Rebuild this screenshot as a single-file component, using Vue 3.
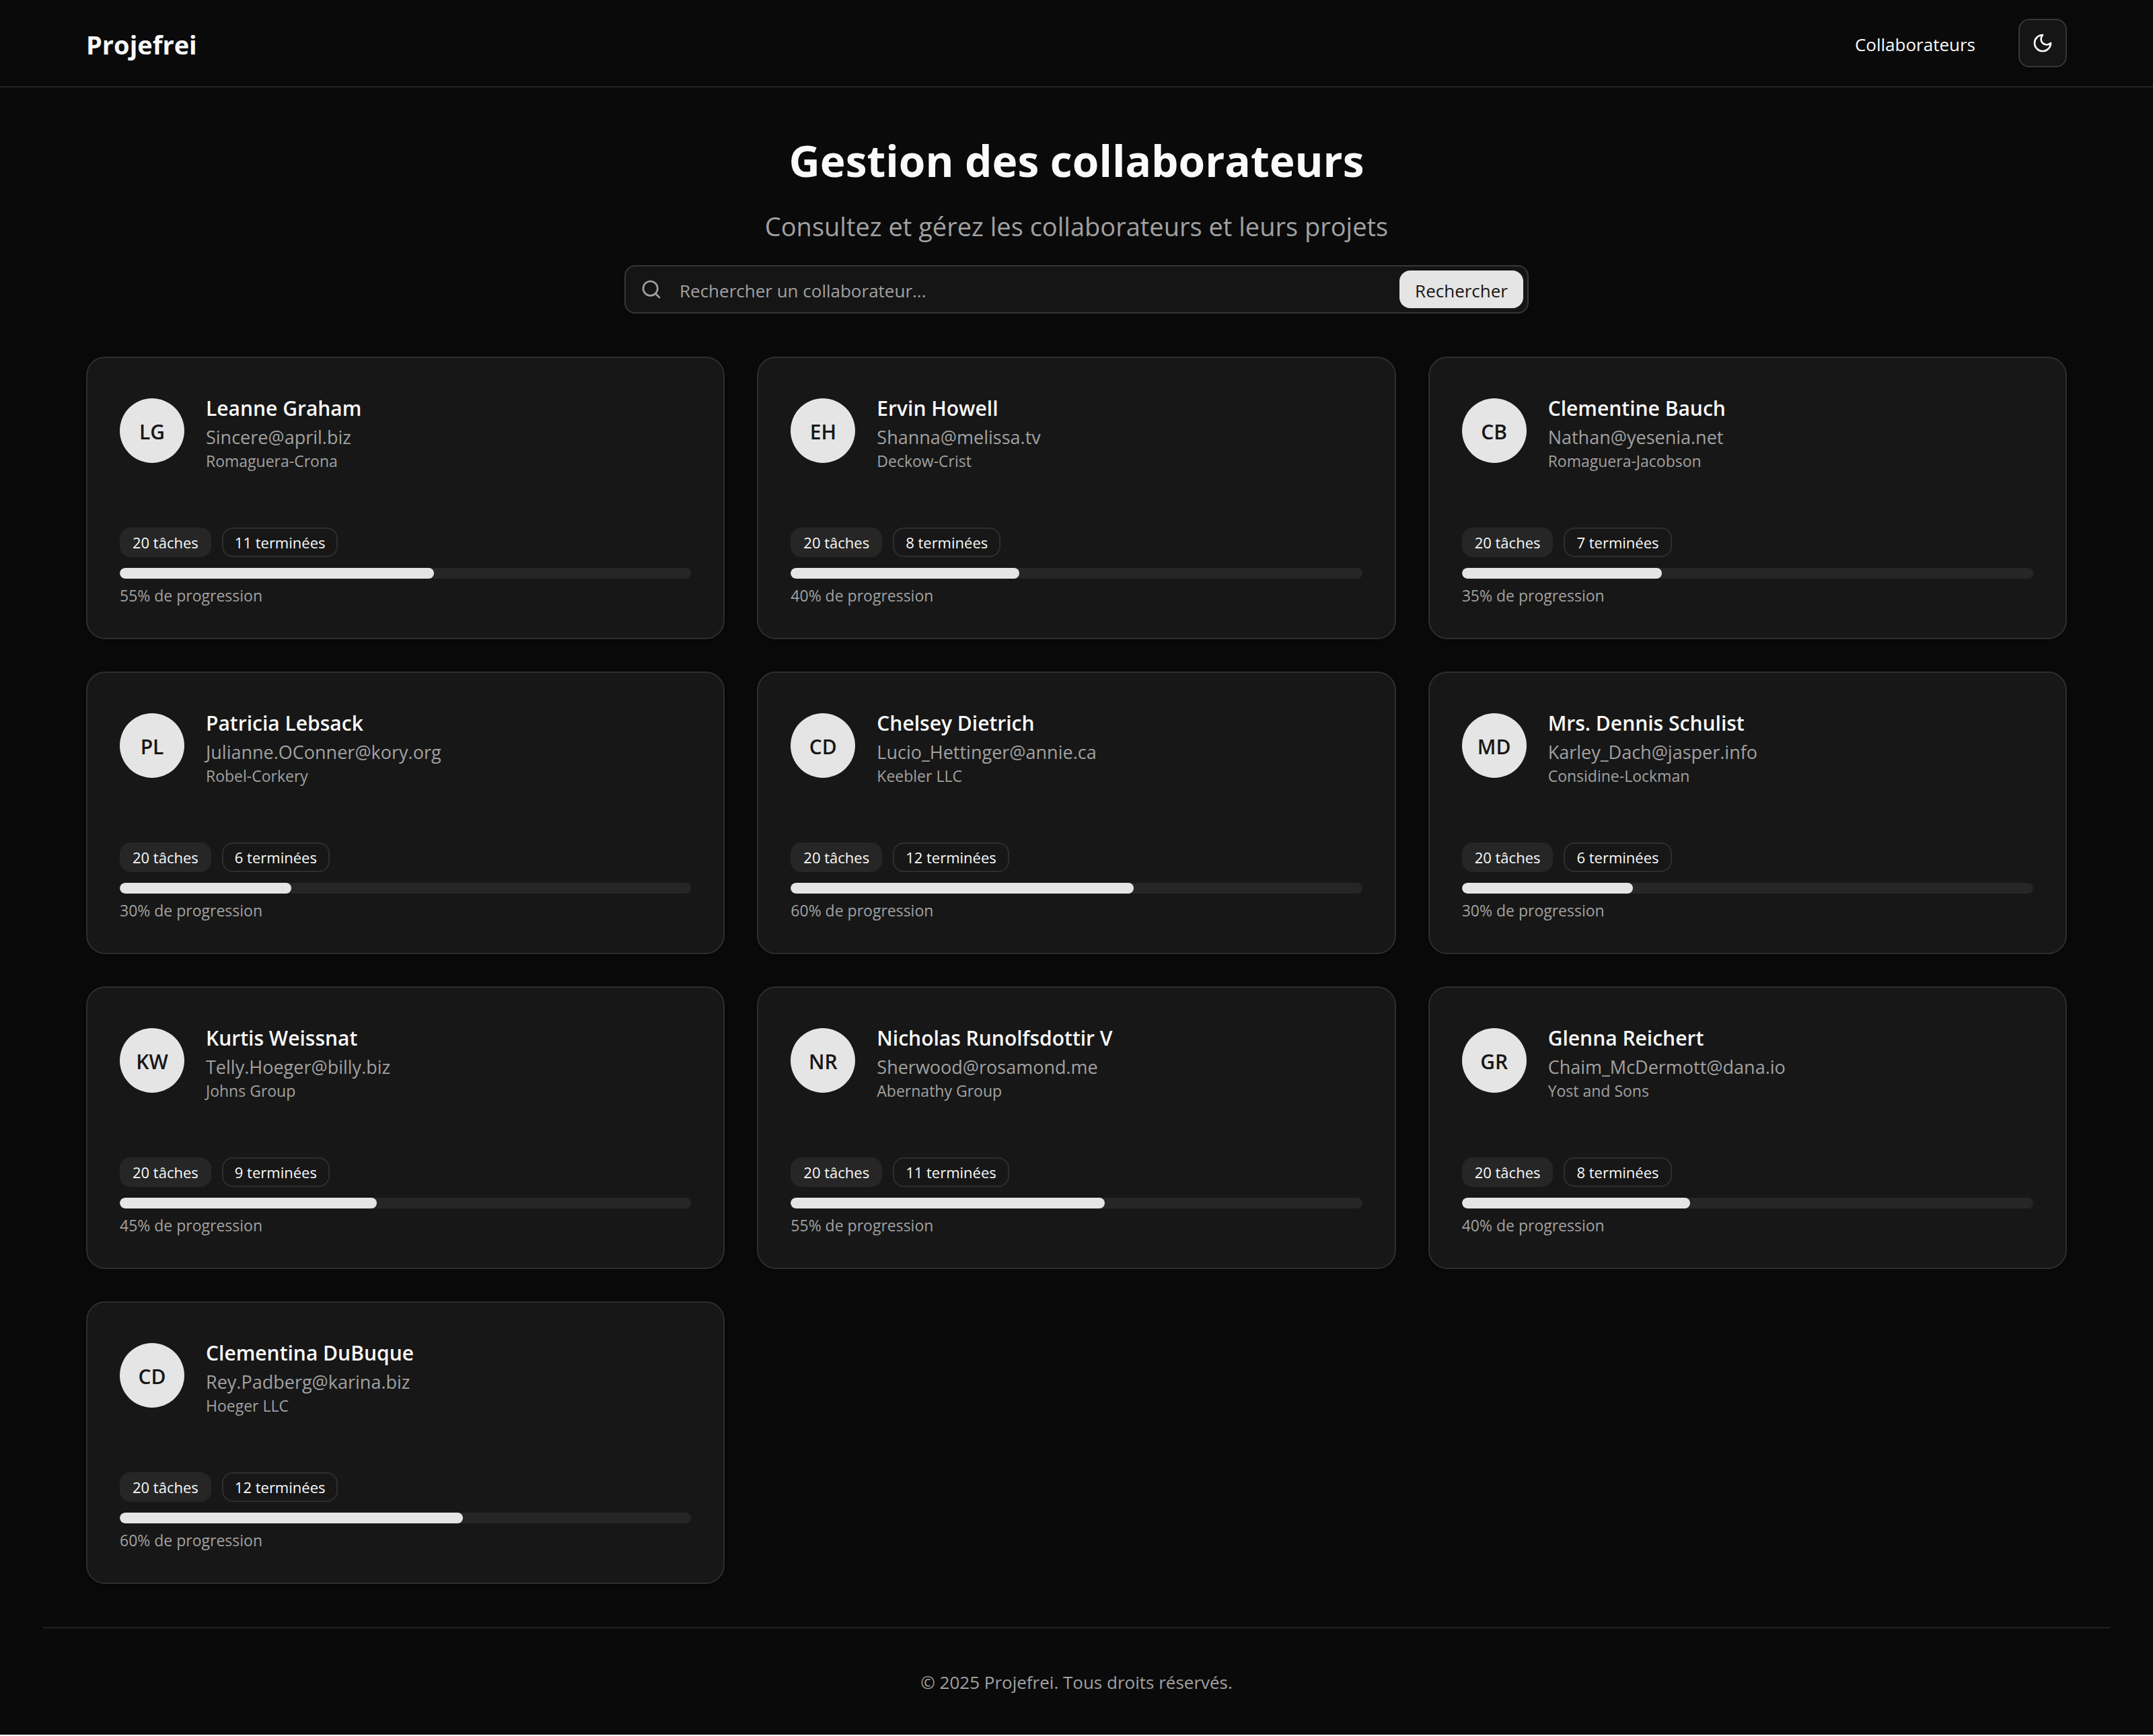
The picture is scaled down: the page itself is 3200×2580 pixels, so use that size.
<script setup>
import { computed, ref } from 'vue'

const collaborators = [
  { name: 'Leanne Graham', email: 'Sincere@april.biz', company: 'Romaguera-Crona', total: 20, done: 11 },
  { name: 'Ervin Howell', email: 'Shanna@melissa.tv', company: 'Deckow-Crist', total: 20, done: 8 },
  { name: 'Clementine Bauch', email: 'Nathan@yesenia.net', company: 'Romaguera-Jacobson', total: 20, done: 7 },
  { name: 'Patricia Lebsack', email: 'Julianne.OConner@kory.org', company: 'Robel-Corkery', total: 20, done: 6 },
  { name: 'Chelsey Dietrich', email: 'Lucio_Hettinger@annie.ca', company: 'Keebler LLC', total: 20, done: 12 },
  { name: 'Mrs. Dennis Schulist', email: 'Karley_Dach@jasper.info', company: 'Considine-Lockman', total: 20, done: 6 },
  { name: 'Kurtis Weissnat', email: 'Telly.Hoeger@billy.biz', company: 'Johns Group', total: 20, done: 9 },
  { name: 'Nicholas Runolfsdottir V', email: 'Sherwood@rosamond.me', company: 'Abernathy Group', total: 20, done: 11 },
  { name: 'Glenna Reichert', email: 'Chaim_McDermott@dana.io', company: 'Yost and Sons', total: 20, done: 8 },
  { name: 'Clementina DuBuque', email: 'Rey.Padberg@karina.biz', company: 'Hoeger LLC', total: 20, done: 12 },
]

const draft = ref('')
const query = ref('')

const initials = (name) =>
  name.split(' ').slice(0, 2).map((part) => part[0]).join('').toUpperCase()

const progress = (person) => Math.round((person.done / person.total) * 100)

const visible = computed(() =>
  collaborators.filter((person) => person.name.toLowerCase().includes(query.value.trim().toLowerCase())),
)
</script>

<template>
  <div class="page">
    <header class="topbar">
      <a class="brand" href="#">Projefrei</a>
      <nav class="nav">
        <a class="nav-link" href="#collaborateurs">Collaborateurs</a>
        <button class="theme-toggle" type="button" aria-label="Changer de thème">
          <svg class="icon" viewBox="0 0 24 24" aria-hidden="true">
            <path d="M12 3a6 6 0 0 0 9 9 9 9 0 1 1-9-9Z" />
          </svg>
        </button>
      </nav>
    </header>

    <main id="collaborateurs" class="content">
      <section class="intro">
        <h1 class="title">Gestion des collaborateurs</h1>
        <p class="subtitle">Consultez et gérez les collaborateurs et leurs projets</p>
        <form class="search" role="search" @submit.prevent="query = draft">
          <svg class="icon search-icon" viewBox="0 0 24 24" aria-hidden="true">
            <circle cx="11" cy="11" r="8" />
            <path d="m21 21-4.34-4.34" />
          </svg>
          <input
            v-model="draft"
            class="search-input"
            type="text"
            aria-label="Rechercher un collaborateur"
            placeholder="Rechercher un collaborateur..."
          />
          <button class="search-button" type="submit">Rechercher</button>
        </form>
      </section>

      <section class="grid" aria-label="Collaborateurs">
        <article v-for="person in visible" :key="person.email" class="card">
          <div class="person">
            <span class="avatar" aria-hidden="true">{{ initials(person.name) }}</span>
            <div class="identity">
              <h2 class="name">{{ person.name }}</h2>
              <p class="email">{{ person.email }}</p>
              <p class="company">{{ person.company }}</p>
            </div>
          </div>
          <div class="badges">
            <span class="badge badge-solid">{{ person.total }} tâches</span>
            <span class="badge">{{ person.done }} terminées</span>
          </div>
          <div
            class="track"
            role="progressbar"
            aria-label="Progression"
            aria-valuemin="0"
            aria-valuemax="100"
            :aria-valuenow="progress(person)"
          >
            <div class="fill" :style="{ width: progress(person) + '%' }"></div>
          </div>
          <p class="progress-label">{{ progress(person) }}% de progression</p>
        </article>
      </section>
    </main>

    <footer class="footer">© 2025 Projefrei. Tous droits réservés.</footer>
  </div>
</template>

<style scoped>
.page {
  --text: #fafafa;
  --muted: #a1a1a1;
  --primary: #e5e5e5;
  --on-primary: #171717;
  --surface: #171717;
  --secondary: #262626;
  --line: #222222;
  --field: #151515;
  --field-line: #373737;
  background: #0a0a0a;
  color: var(--text);
  font-family: "Open Sans", "Noto Sans", sans-serif;
  font-size: 26px;
}

.page *,
.page *::before {
  box-sizing: border-box;
}

h1,
h2,
p {
  margin: 0;
}

a {
  color: inherit;
  text-decoration: none;
}

button,
input {
  font: inherit;
  color: inherit;
}

.icon {
  flex: none;
  width: 32px;
  height: 32px;
  fill: none;
  stroke: currentColor;
  stroke-width: 2;
  stroke-linecap: round;
  stroke-linejoin: round;
}

.topbar {
  display: flex;
  align-items: center;
  justify-content: space-between;
  padding: 28px 128px;
  border-bottom: 2px solid var(--line);
}

.brand {
  padding-top: 4px;
  font-size: 38px;
  line-height: 56px;
  font-weight: 700;
}

.nav {
  display: flex;
  align-items: center;
  gap: 64px;
}

.nav-link {
  padding-top: 4px;
  line-height: 40px;
}

.theme-toggle {
  display: flex;
  align-items: center;
  justify-content: center;
  width: 72px;
  height: 72px;
  padding: 0;
  border: 2px solid var(--field-line);
  border-radius: 16px;
  background: var(--field);
  box-shadow: 0 2px 8px rgba(0, 0, 0, 0.25);
}

.content {
  padding: 64px 128px;
}

.intro {
  display: flex;
  flex-direction: column;
  align-items: center;
  text-align: center;
}

.title {
  font-size: 64px;
  line-height: 90px;
  font-weight: 700;
}

.subtitle {
  margin: 24px 0 30px;
  color: var(--muted);
  font-size: 38px;
  line-height: 56px;
}

.search {
  display: flex;
  align-items: center;
  gap: 26px;
  width: 100%;
  max-width: 1344px;
  height: 72px;
  padding: 0 6px 0 22px;
  border: 2px solid var(--field-line);
  border-radius: 16px;
  background: var(--field);
  box-shadow: 0 2px 8px rgba(0, 0, 0, 0.25);
}

.search-icon {
  color: var(--muted);
}

.search-input {
  flex: 1;
  min-width: 0;
  height: 56px;
  padding: 4px 0 0;
  border: 0;
  outline: 0;
  background: none;
}

.search-input::placeholder {
  color: var(--muted);
  opacity: 1;
}

.search-button {
  height: 56px;
  padding: 4px 23px 0;
  border: 0;
  border-radius: 16px;
  background: var(--primary);
  color: var(--on-primary);
}

.grid {
  display: grid;
  grid-template-columns: repeat(3, minmax(0, 1fr));
  gap: 48px;
  margin-top: 64px;
}

.card {
  padding: 50px 48px 46px;
  border: 2px solid #2e2e2e;
  border-radius: 28px;
  background: var(--surface);
  box-shadow: 0 2px 12px rgba(0, 0, 0, 0.4);
}

.person {
  display: flex;
  align-items: flex-start;
  gap: 32px;
}

.avatar {
  display: flex;
  flex: none;
  align-items: center;
  justify-content: center;
  width: 96px;
  height: 96px;
  margin-top: 10px;
  padding-top: 2px;
  border-radius: 50%;
  background: var(--primary);
  color: var(--on-primary);
  font-size: 30px;
  font-weight: 600;
}

.identity {
  min-width: 0;
  padding-top: 4px;
}

.name {
  font-size: 30px;
  line-height: 42px;
  font-weight: 600;
}

.email {
  color: var(--muted);
  font-size: 27px;
  line-height: 44px;
}

.company {
  color: var(--muted);
  font-size: 23px;
  line-height: 26px;
}

.badges {
  display: flex;
  gap: 16px;
  margin-top: 86px;
}

.badge {
  height: 44px;
  padding: 0 17px;
  border: 2px solid #2e2e2e;
  border-radius: 16px;
  font-size: 22px;
  line-height: 40px;
}

.badge-solid {
  border-color: var(--secondary);
  background: var(--secondary);
}

.track {
  height: 16px;
  margin-top: 16px;
  overflow: hidden;
  border-radius: 8px;
  background: var(--secondary);
}

.fill {
  height: 100%;
  border-radius: 8px;
  background: var(--primary);
}

.progress-label {
  margin-top: 8px;
  color: var(--muted);
  font-size: 23px;
  line-height: 34px;
}

.footer {
  margin: 0 64px;
  padding: 60px 0 58px;
  border-top: 2px solid var(--line);
  color: var(--muted);
  line-height: 40px;
  text-align: center;
}
</style>

<style>
body {
  margin: 0;
  background: #ffffff;
}
</style>
